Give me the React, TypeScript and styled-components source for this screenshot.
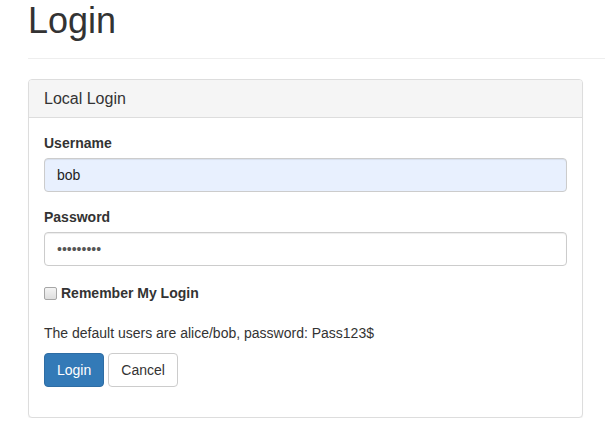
import styled, { createGlobalStyle } from "styled-components";

// Global
const GlobalStyle = createGlobalStyle`
  html, body {
    margin: 0;
    padding: 0;
    background: #fff;
    overflow: hidden;
  }
  body {
    font-family: "Liberation Sans", Arial, Helvetica, sans-serif;
    font-size: 14px;
    line-height: 1.42857143;
    color: #333;
  }
  * {
    box-sizing: border-box;
  }
`;

const App = () => {
  return (
    <Page>
      <GlobalStyle />
      <PageHeader>
        <Title>Login</Title>
      </PageHeader>
      <Panel>
        <PanelHeading>Local Login</PanelHeading>
        <PanelBody>
          <form onSubmit={(event) => event.preventDefault()}>
            <FormGroup>
              <Label htmlFor="Username">Username</Label>
              <Input id="Username" type="text" defaultValue="bob" $autofill />
            </FormGroup>
            <FormGroup>
              <Label htmlFor="Password">Password</Label>
              <Input id="Password" type="password" defaultValue="Pass123$!" />
            </FormGroup>
            <CheckRow>
              <Check type="checkbox" />
              Remember My Login
            </CheckRow>
            <Hint>The default users are alice/bob, password: Pass123$</Hint>
            <ButtonRow>
              <Button type="submit" $primary>
                Login
              </Button>
              <Button type="button">Cancel</Button>
            </ButtonRow>
          </form>
        </PanelBody>
      </Panel>
    </Page>
  );
};

// Styles
const Page = styled.div`
  padding: 1px 0 0 28px;
`;

const PageHeader = styled.div`
  padding-bottom: 17px;
  border-bottom: 1px solid #eee;
  margin-bottom: 20px;
`;

const Title = styled.h1`
  margin: 0;
  font-size: 36px;
  font-weight: 500;
  line-height: 1.1;
  color: #333;
`;

const Panel = styled.div`
  width: 555px;
  border: 1px solid #ddd;
  border-radius: 4px;
  background: #fff;
  box-shadow: 0 1px 1px rgba(0, 0, 0, 0.05);
`;

const PanelHeading = styled.div`
  padding: 10px 15px;
  font-size: 16px;
  line-height: 1.1;
  color: #333;
  background: #f5f5f5;
  border-bottom: 1px solid #ddd;
  border-radius: 3px 3px 0 0;
`;

const PanelBody = styled.div`
  padding: 15px;
`;

const FormGroup = styled.div`
  margin-bottom: 15px;
`;

const Label = styled.label`
  display: block;
  margin-bottom: 5px;
  font-weight: 700;
`;

const Input = styled.input<{ $autofill?: boolean }>`
  display: block;
  width: 100%;
  height: 34px;
  padding: 6px 12px;
  font-family: inherit;
  font-size: 14px;
  line-height: 1.42857143;
  color: ${({ $autofill }) => ($autofill ? "#222" : "#555")};
  background: ${({ $autofill }) => ($autofill ? "#e8f0fe" : "#fff")};
  border: 1px solid #ccc;
  border-radius: 4px;
  box-shadow: inset 0 1px 1px rgba(0, 0, 0, 0.075);
  outline: none;
`;

const CheckRow = styled.label`
  display: flex;
  align-items: center;
  gap: 4px;
  min-height: 20px;
  padding-top: 2px;
  font-weight: 700;
`;

const Check = styled.input`
  appearance: none;
  width: 13px;
  height: 13px;
  margin: 0;
  border: 1px solid #a6a6a6;
  border-radius: 2px;
  background: linear-gradient(#f4f4f4, #dedede);
`;

const Hint = styled.div`
  margin: 20px 0 10px;
`;

const ButtonRow = styled.div`
  display: flex;
  gap: 4px;
  margin-bottom: 15px;
`;

const Button = styled.button<{ $primary?: boolean }>`
  height: 34px;
  padding: 6px 12px;
  font-family: inherit;
  font-size: 14px;
  line-height: 1.42857143;
  border-radius: 4px;
  cursor: pointer;
  color: ${({ $primary }) => ($primary ? "#fff" : "#333")};
  background: ${({ $primary }) => ($primary ? "#337ab7" : "#fff")};
  border: 1px solid ${({ $primary }) => ($primary ? "#2e6da4" : "#ccc")};
`;

// Exports
export default App;
